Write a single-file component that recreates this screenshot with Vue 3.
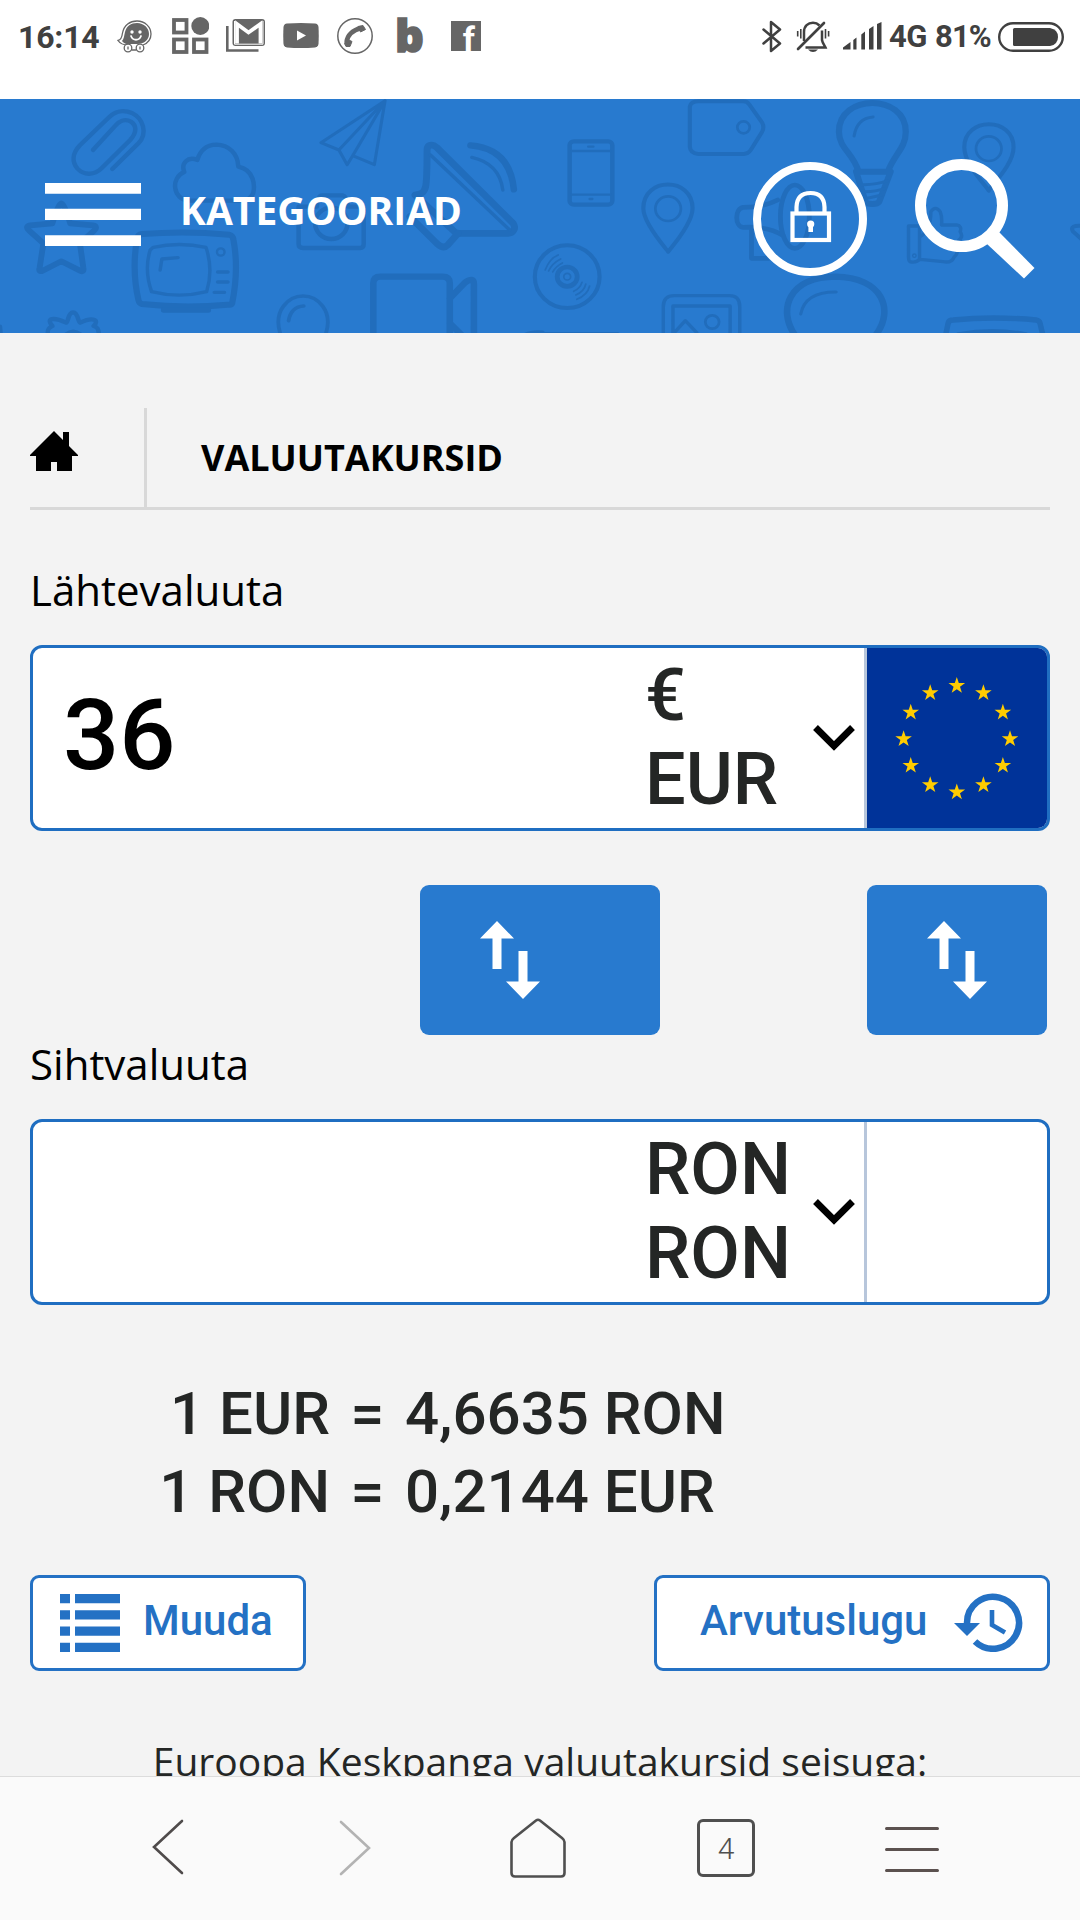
<template>
  <div class="phone">
    <!-- status bar -->
    <div class="status-bar">
      <span class="status-text clock">16:14</span>
      <svg class="icon waze" viewBox="0 0 35 33">
        <path d="M11 25C7 25 3 23.500 1 20.500C4 20 5 17 5.500 13C7 5 13 1 20 1C28 1 34 7 34 14C34 19 31 23 26 25" fill="none" stroke="#666" stroke-width="1.300" />
        <path d="M5 21C7 19 7 16 8 12C9.500 6 14 3 20 3C27 3 32 8 32 14C32 20 27 24 20 24H10C8 24 6 22.500 5 21Z" fill="#666" />
        <circle cx="15" cy="12" r="1.700" fill="#fff" />
        <circle cx="23" cy="12" r="1.700" fill="#fff" />
        <path d="M14 16C16 21 22 21 24 16" fill="none" stroke="#fff" stroke-width="1.800" stroke-linecap="round" />
        <circle cx="11" cy="28" r="3.800" fill="#fff" stroke="#666" stroke-width="1.300" />
        <circle cx="23" cy="28" r="3.800" fill="#fff" stroke="#666" stroke-width="1.300" />
        <path d="M14.500 30H19.500M11 26.500V29.500M23 26.500V29.500" stroke="#666" stroke-width="1.300" />
      </svg>
      <svg class="icon apps" viewBox="0 0 37 37">
        <g fill="none" stroke="#666" stroke-width="3.800">
          <rect x="2" y="3" width="12.500" height="12.500" />
          <rect x="2" y="22.500" width="12.500" height="12.500" />
          <rect x="22" y="22.500" width="12.500" height="12.500" />
        </g>
        <circle cx="28.300" cy="9" r="9" fill="#666" />
      </svg>
      <svg class="icon gmail" viewBox="0 0 39 33">
        <path d="M1.300 7V31.500H32.500" fill="none" stroke="#666" stroke-width="2.600" />
        <rect x="6.500" y="0" width="32.500" height="27" rx="3" fill="#666" />
        <path d="M11 24.500V5L22.500 13.500L34.500 5V24.500" fill="none" stroke="#fff" stroke-width="3.800" />
        <path d="M8.500 2V25.200H37V2" fill="none" stroke="#fff" stroke-width="1" />
      </svg>
      <svg class="icon youtube" viewBox="0 0 36 25">
        <path d="M4 .6Q18 -.6 32 .6Q35 1 35.500 4Q36 12.500 35.500 21Q35 24 32 24.400Q18 25.600 4 24.400Q1 24 .5 21Q0 12.500 .5 4Q1 1 4 .6Z" fill="#666" />
        <path d="M14 7.500L23 12.500L14 17.500Z" fill="#fff" />
      </svg>
      <svg class="icon call" viewBox="0 0 36 36">
        <circle cx="18" cy="18" r="17.200" fill="none" stroke="#666" stroke-width="1.500" />
        <path d="M9.500 24Q11 13.500 24 10" fill="none" stroke="#666" stroke-width="4.500" />
        <path d="M21 8.500L26 7.500L28.500 11.500L23.500 14ZM7.500 25.500L9.500 20.800L15 23.500L13 28.500L9 28.500Z" fill="#666" stroke="#666" stroke-linejoin="round" />
      </svg>
      <span class="beta">b</span>
      <span class="facebook">f</span>

      <svg class="icon bluetooth" viewBox="0 0 20 33">
        <path d="M1.500 9.500L18 23.500L9 31V2L18 9.500L1.500 23.500" fill="none" stroke="#404040" stroke-width="2.500" stroke-linejoin="round" stroke-linecap="round" />
      </svg>
      <svg class="icon bell" viewBox="0 0 34 32">
        <g fill="none" stroke="#404040">
          <path d="M8 20V11C8 5 12 1.800 17 1.800C20 1.800 22 3 23.500 4.500M26 9.500V19C26.500 22 28.500 24 29.500 26.500H9.500" stroke-width="2.500" />
          <path d="M28 2L2 28" stroke-width="2.600" stroke-linecap="round" />
          <path d="M1.700 10V15.500M4.800 8V17.500M29.500 8V17.500M32.600 10V15.500" stroke-width="1.600" />
        </g>
        <path d="M12 28.500H22Q17 33.500 12 28.500Z" fill="#404040" />
      </svg>
      <svg class="icon signal" viewBox="0 0 39 28">
        <path d="M0 27.500V25.500L7.500 20V27.500ZM10.300 27.500V18L13.500 15.500V27.500ZM18.300 27.500V12.500L22 9.500V27.500ZM26 27.500V7L30.500 4V27.500ZM34 27.500V2L38.500 0V27.500Z" fill="#404040" />
      </svg>
      <span class="status-text network">4G</span>
      <span class="status-text percent">81%</span>
      <svg class="icon battery" viewBox="0 0 66 30">
        <rect x="1.200" y="1.200" width="63.600" height="27.600" rx="13.800" fill="none" stroke="#404040" stroke-width="2.400" />
        <path d="M16.500 6H52Q60 7.500 60 15T52 24H16.500Q15 24 15 22.500V7.500Q15 6 16.500 6Z" fill="#404040" />
      </svg>
    </div>

    <!-- site header -->
    <header class="site-header">
      <svg class="pattern" viewBox="0 0 1080 234" fill="none" stroke="#216dbc" stroke-linecap="round" stroke-linejoin="round">
        <g transform="translate(0 -9) scale(.3444 .3333)" stroke-width="13">
          <path d="M326 237L402 160C430 130 415 85 385 70C350 55 330 68 315 83L232 166C210 190 208 215 225 236C245 258 275 255 295 235L378 150C400 125 395 105 380 95C362 85 345 95 335 107L270 180" />
          <path d="M735 310C740 290 740 240 692 230C690 190 665 165 628 164C595 165 580 185 573 210C545 198 525 220 535 246C495 262 500 330 550 332H700Q725 332 735 310Z" />
          <path d="M1118 32L932 158L984 180L1008 224L1024 197L1087 224ZM1118 32L984 180M1118 32L1024 197" stroke-width="9" />
          <path d="M178 340Q186 340 204 400L270 406C282 408 280 416 274 421L232 460L242 534C244 544 240 546 232 542L178 514L124 542C116 546 112 542 115 534L126 460L84 421C76 414 76 408 88 406L152 400Q170 340 178 340Z" stroke-width="17" />
          <path d="M412 432Q540 422 665 434Q676 436 678 450Q694 540 674 640Q672 646 660 644Q540 656 412 642Q404 640 402 630Q382 540 398 446Q400 434 412 432Z" stroke-width="18" />
          <path d="M445 472Q520 455 598 472Q620 540 600 605Q520 626 440 605Q418 540 436 480ZM465 540L470 507L517 503M632 546H662M632 576H662M622 607H652" stroke-width="10" />
          <circle cx="641" cy="486" r="11" stroke-width="7" />
          <path d="M475 660H605" stroke-width="16" />
          <path d="M870 350H920Q922 316 935 316H995Q1008 318 1010 350H1048Q1056 350 1056 360V462Q1056 474 1046 474H880Q867 474 867 462V350" />
          <circle cx="962" cy="400" r="47" />
          <path d="M1240 180C1240 165 1255 160 1268 172L1490 400C1500 415 1490 430 1475 430H1325L1205 315C1240 310 1240 300 1240 180Z" stroke-width="20" />
          <path d="M1330 430L1300 465Q1288 478 1270 462L1190 380" stroke-width="20" />
          <path d="M1250 195L1480 420M1370 202Q1450 220 1460 300" stroke-width="10" />
          <path d="M1366 166Q1480 175 1492 298" stroke-width="19" />
          <path d="M1084 735V580Q1084 560 1104 560H1285Q1306 560 1306 580V735M1306 625L1350 578Q1376 560 1376 582V735M1306 700L1340 735" stroke-width="19" />
          <path d="M140 735C135 715 145 712 152 708C132 685 155 680 192 698C200 695 196 668 212 667C228 668 225 695 233 698C270 680 290 690 272 708C285 712 285 718 288 735M190 735Q212 715 236 735" />
          <path d="M815 735C790 660 840 618 880 618C920 618 970 660 945 735M838 692Q845 650 882 648" stroke-width="11" />
          <path d="M0 710L2 735M1525 735Q1545 725 1575 728" />
        </g>
        <g transform="translate(540 -9) scale(.3444 .3333)" stroke-width="12">
          <rect x="86" y="154" width="124" height="190" rx="12" stroke-width="13" />
          <path d="M92 183H205M92 314H205M140 170H155M144 327H152" stroke-width="7" />
          <path d="M435 50Q438 34 460 34H590Q602 34 608 44L645 98Q652 112 645 125L612 180Q604 192 592 192H460Q436 190 435 170Z" />
          <circle cx="591" cy="112" r="18" stroke-width="8" />
          <path d="M372 485C365 475 300 400 300 355C300 260 443 260 443 355C443 400 380 475 372 485Z" />
          <circle cx="372" cy="356" r="37" stroke-width="8" />
          <circle cx="79" cy="560" r="94" />
          <circle cx="79" cy="560" r="29" stroke-width="14" />
          <circle cx="79" cy="560" r="10" stroke-width="5" />
          <path d="M15 540Q28 505 53 495M25 543Q35 520 60 507M37 546Q45 530 65 519M107 628Q138 615 144 588M104 615Q128 605 133 582M98 604Q116 596 122 577" stroke-width="5" />
          <path d="M925 245C910 190 868 175 868 125C868 10 1062 10 1062 125C1062 175 1030 190 1010 245M918 245H1018M918 245L945 335Q950 342 965 342Q980 342 985 335L1018 245" stroke-width="18" />
          <path d="M912 138Q920 85 967 81M935 284Q975 285 1010 272M945 305Q975 305 1000 296M950 325L990 316" stroke-width="9" />
          <path d="M1303 302C1295 285 1232 225 1232 172C1232 80 1375 80 1375 172C1375 225 1310 285 1303 302Z" />
          <circle cx="1303" cy="176" r="37" stroke-width="8" />
          <path d="M690 330Q650 352 590 352C565 355 565 410 590 412Q660 408 705 436M614 415V505H665V488" stroke-width="14" />
          <ellipse cx="740" cy="380" rx="42" ry="95" stroke-width="14" />
          <path d="M1070 408H1102V508Q1095 518 1078 516Q1070 516 1070 500ZM1104 440Q1135 420 1135 365Q1148 345 1162 365Q1168 380 1166 405H1210Q1226 408 1220 425Q1230 440 1216 450Q1224 468 1210 478Q1215 490 1202 502Q1195 520 1170 515L1104 508" stroke-width="10" />
          <circle cx="1087" cy="497" r="5" stroke-width="4" />
          <path d="M740 735C690 660 720 562 858 560C995 562 1030 660 975 735" stroke-width="19" />
          <path d="M757 672Q770 605 860 606" stroke-width="9" />
          <path d="M358 735V650Q358 617 390 617H550Q580 617 580 650V735M386 735V648H552V735M390 728L422 692L455 728" stroke-width="10" />
          <circle cx="500" cy="696" r="20" stroke-width="8" />
          <path d="M1178 735L1185 700Q1187 690 1200 690Q1315 678 1440 690Q1450 692 1452 700L1460 735M1215 735Q1315 715 1410 735" stroke-width="16" />
          <path d="M1575 408Q1535 405 1548 425L1575 450M0 732H225" />
        </g>
      </svg>
      <svg class="menu-icon" viewBox="0 0 96 63">
        <path d="M0 0H96V10.700H0ZM0 25.700H96V37H0ZM0 52.300H96V63H0Z" fill="#fff" />
      </svg>
      <span class="header-title">KATEGOORIAD</span>
      <svg class="lock-icon" viewBox="0 0 114 114" fill="none" stroke="#fff">
        <circle cx="57" cy="57" r="53" stroke-width="8" />
        <rect x="39.500" y="51.500" width="36.500" height="26.500" stroke-width="4.200" />
        <path d="M43.500 50V45Q44 31 57.500 31T71.500 45V50" stroke-width="4.200" />
        <circle cx="57.700" cy="62" r="3.600" fill="#fff" stroke="none" />
        <path d="M57.700 62V70" stroke-width="4.600" />
      </svg>
      <svg class="search-icon" viewBox="0 0 120 120">
        <circle cx="46.500" cy="46.500" r="41" fill="none" stroke="#fff" stroke-width="11" />
        <path d="M72 85L84 73L119.500 109L109 119.500Z" fill="#fff" />
      </svg>
    </header>

    <main class="content">
      <nav class="breadcrumb">
        <div class="crumb-home">
          <svg viewBox="0 0 48 40">
            <path d="M24 0L33 9V1H39V15L48 24V25H42V40H27V31H21V40H6V25H0V24Z" fill="#000" />
          </svg>
        </div>
        <span class="crumb-title">VALUUTAKURSID</span>
      </nav>

      <label class="field-label">Lähtevaluuta</label>
      <div class="currency-box">
        <input v-model="source.amount" class="amount" type="text">
        <div class="currency"><span>{{ source.symbol }}</span><span>{{ source.code }}</span></div>
        <svg class="chevron" viewBox="0 0 42 26"><path d="M2.500 2.500L21 21L39.500 2.500" fill="none" stroke="#000" stroke-width="6.800" /></svg>
        <div class="flag eu">
          <svg viewBox="0 0 180 180" fill="#fc0">
            <path
              v-for="star in stars"
              :key="star.id"
              d="M0 -8.700L2 -2.700H8.300L3.200 1L5.100 7L0 3.400L-5.100 7L-3.200 1L-8.300 -2.700H-2Z"
              :transform="`translate(${star.x} ${star.y})`"
            />
          </svg>
        </div>
      </div>

      <div class="swap-row">
        <button
          v-for="name in ['wide', 'narrow']"
          :key="name"
          :class="['swap-button', name]"
          @click="swapCurrencies"
        >
          <svg viewBox="0 0 60 78">
            <path d="M17 0L34 17.500H21.500V48H12.500V17.500H0ZM38.500 30H47.500V60.500H60L43 78L26 60.500H38.500Z" fill="#fff" />
          </svg>
        </button>
      </div>

      <label class="field-label">Sihtvaluuta</label>
      <div class="currency-box">
        <input v-model="target.amount" class="amount" type="text">
        <div class="currency"><span>{{ target.symbol }}</span><span>{{ target.code }}</span></div>
        <svg class="chevron" viewBox="0 0 42 26"><path d="M2.500 2.500L21 21L39.500 2.500" fill="none" stroke="#000" stroke-width="6.800" /></svg>
        <div class="flag"></div>
      </div>

      <div class="rates">
        <template v-for="rate in rates" :key="rate.from">
          <span class="rate-from">{{ rate.from }}</span>
          <span>=</span>
          <span>{{ rate.to }}</span>
        </template>
      </div>

      <div class="actions">
        <button class="action-button edit">
          <svg viewBox="0 0 60 58">
            <path d="M0 0H10V9.300H0ZM15 0H60V9.300H15ZM0 16.300H10V25.500H0ZM15 16.300H60V25.500H15ZM0 32.500H10V41.700H0ZM15 32.500H60V41.700H15ZM0 48.700H10V58H0ZM15 48.700H60V58H15Z" fill="#2471c4" />
          </svg>
          <span>Muuda</span>
        </button>
        <button class="action-button history">
          <span>Arvutuslugu</span>
          <svg viewBox="0 0 69 59">
            <path d="M13 30A26 26 0 1 1 21 48.500" fill="none" stroke="#2471c4" stroke-width="6.500" />
            <path d="M0 30H26L13 43Z" fill="#2471c4" />
            <path d="M38 17V32L51 39.500" fill="none" stroke="#2471c4" stroke-width="4.600" />
          </svg>
        </button>
      </div>

      <p class="footnote">Euroopa Keskpanga valuutakursid seisuga:</p>
    </main>

    <!-- browser toolbar -->
    <nav class="toolbar">
      <svg class="tool back" viewBox="0 0 32 56"><path d="M30 2L2 28L30 54" fill="none" stroke="#4f4b4b" stroke-width="2.600" stroke-linecap="round" /></svg>
      <svg class="tool forward" viewBox="0 0 32 56"><path d="M2 2L30 28L2 54" fill="none" stroke="#b3b3b3" stroke-width="2.600" stroke-linecap="round" /></svg>
      <svg class="tool home" viewBox="0 0 56 60"><path d="M4 20L26 2.500Q28 1 30 2.500L52 20Q54.500 22 54.500 24V55Q54.500 58.500 51 58.500H5Q1.500 58.500 1.500 55V24Q1.500 22 4 20Z" fill="none" stroke="#4f4f4f" stroke-width="2.600" /></svg>
      <div class="tool tabs">4</div>
      <svg class="tool more" viewBox="0 0 54 48"><path d="M1.500 3.500H52.500M1.500 24.500H52.500M1.500 45.500H52.500" stroke="#5b514f" stroke-width="3" stroke-linecap="round" /></svg>
    </nav>
  </div>
</template>

<script setup>
import { ref } from 'vue'

const source = ref({ amount: '36', symbol: '€', code: 'EUR' })
const target = ref({ amount: '', symbol: 'RON', code: 'RON' })

const rates = ref([
  { from: '1 EUR', to: '4,6635 RON' },
  { from: '1 RON', to: '0,2144 EUR' }
])

// twelve stars of the EU flag
const stars = Array.from({ length: 12 }, (_, i) => {
  const angle = (i * Math.PI) / 6
  return {
    id: i,
    x: (89.8 + 53.2 * Math.sin(angle)).toFixed(2),
    y: (91 - 53.2 * Math.cos(angle)).toFixed(2)
  }
})

const swapCurrencies = () => {
  const old = source.value
  source.value = target.value
  target.value = old
}
</script>

<style>
body {
  margin: 0;
}
</style>

<style scoped>
* {
  box-sizing: border-box;
}
svg {
  display: block;
  flex: none;
}
button {
  margin: 0;
  cursor: pointer;
}
.phone {
  width: 1080px;
  height: 1920px;
  overflow: hidden;
  display: flex;
  flex-direction: column;
  background: #f3f3f3;
  font-family: "Open Sans", "Noto Sans", sans-serif;
}

/* status bar */
.status-bar {
  height: 99px;
  flex: none;
  display: flex;
  align-items: flex-start;
  background: #fff;
  font-family: Roboto, sans-serif;
  color: #404040;
}
.status-text {
  font-size: 32px;
  font-weight: 700;
  line-height: 38px;
  margin-top: 18px;
  white-space: nowrap;
}
.clock {
  width: 99px;
  padding-left: 18px;
  letter-spacing: -0.2px;
}
.waze {
  width: 35px;
  height: 33px;
  margin: 20px 0 0 18px;
}
.apps {
  width: 37px;
  height: 37px;
  margin: 17px 0 0 20px;
}
.gmail {
  width: 39px;
  height: 33px;
  margin: 19px 0 0 17px;
}
.youtube {
  width: 36px;
  height: 25px;
  margin: 23px 0 0 18px;
}
.call {
  width: 36px;
  height: 36px;
  margin: 18px 0 0 18px;
}
.beta {
  width: 30px;
  margin: 11px 0 0 22px;
  font-family: "Open Sans", sans-serif;
  font-size: 45px;
  line-height: 48px;
  font-weight: 800;
  color: #666;
  -webkit-text-stroke: 1.5px #666;
}
.facebook {
  width: 30px;
  height: 30px;
  margin: 21px 0 0 26px;
  padding-right: 6px;
  background: #666;
  color: #fff;
  font-size: 34px;
  line-height: 37px;
  font-weight: 700;
  text-align: right;
}
.bluetooth {
  width: 20px;
  height: 33px;
  margin: 20px 0 0 auto;
}
.bell {
  width: 34px;
  height: 32px;
  margin: 21px 0 0 14px;
}
.signal {
  width: 39px;
  height: 28px;
  margin: 22px 0 0 13px;
}
.network {
  width: 40px;
  margin-left: 7px;
  font-size: 31px;
  letter-spacing: -0.5px;
}
.percent {
  width: 57px;
  margin-left: 6px;
  font-size: 31px;
  letter-spacing: -0.9px;
}
.battery {
  width: 66px;
  height: 30px;
  margin: 22px 16px 0 6px;
}

/* header */
.site-header {
  position: relative;
  height: 234px;
  flex: none;
  display: flex;
  align-items: flex-start;
  background: #287acf;
  overflow: hidden;
}
.pattern {
  position: absolute;
  inset: 0;
  width: 1080px;
  height: 234px;
}
.menu-icon,
.header-title,
.lock-icon,
.search-icon {
  position: relative;
}
.menu-icon {
  width: 96px;
  height: 63px;
  margin: 84px 0 0 45px;
}
.header-title {
  margin: 91px 0 0 39px;
  font-size: 39px;
  line-height: 40px;
  font-weight: 700;
  color: #fff;
}
.lock-icon {
  width: 114px;
  height: 114px;
  margin: 63px 0 0 auto;
}
.search-icon {
  width: 120px;
  height: 120px;
  margin: 60px 45px 0 48px;
}

/* content */
.content {
  flex: 1;
  min-height: 0;
  overflow: hidden;
  padding: 75px 30px 0;
}
.breadcrumb {
  display: flex;
  height: 102px;
  border-bottom: 3px solid #d8d8d8;
}
.crumb-home {
  width: 117px;
  padding-top: 23px;
  border-right: 3px solid #d8d8d8;
}
.crumb-home svg {
  width: 48px;
  height: 40px;
}
.crumb-title {
  padding-left: 54px;
  font-size: 36px;
  line-height: 99px;
  font-weight: 700;
  color: #000;
}
.field-label {
  display: block;
  height: 60px;
  margin-bottom: 25px;
  font-size: 42px;
  line-height: 60px;
  color: #000;
}
.breadcrumb + .field-label {
  margin-top: 50px;
}
.currency-box {
  display: flex;
  height: 186px;
  border: 3px solid #1f6ec1;
  border-radius: 12px;
  background: #fff;
  overflow: hidden;
  font-family: Roboto, sans-serif;
  font-weight: 500;
}
.amount {
  width: 612px;
  height: 180px;
  margin: 0;
  padding: 0 0 7px 30px;
  border: none;
  outline: none;
  background: transparent;
  font: inherit;
  font-size: 99px;
  color: #000;
}
.currency {
  display: flex;
  flex-direction: column;
  width: 168px;
  padding-top: 6px;
  font-size: 72px;
  line-height: 84px;
  color: #242625;
}
.chevron {
  width: 42px;
  height: 26px;
  margin: 77px 9px 0 0;
}
.flag {
  width: 183px;
  height: 180px;
  flex: none;
  border-left: 3px solid #b7c6db;
}
.flag.eu {
  background: #039;
}
.swap-row {
  display: flex;
  justify-content: space-between;
  height: 150px;
  margin: 54px 3px -1px 390px;
}
.swap-button {
  height: 150px;
  padding: 0 0 0 60px;
  border: none;
  border-radius: 9px;
  background: #287acf;
}
.swap-button svg {
  width: 60px;
  height: 78px;
}
.wide {
  width: 240px;
}
.narrow {
  width: 180px;
}
.rates {
  display: grid;
  grid-template-columns: 300px 34px auto;
  column-gap: 20.5px;
  margin-top: 70px;
  font-family: Roboto, sans-serif;
  font-size: 60px;
  line-height: 78px;
  font-weight: 500;
  color: #242625;
}
.rate-from {
  text-align: right;
}
.actions {
  display: flex;
  justify-content: space-between;
  margin-top: 44px;
}
.action-button {
  display: flex;
  height: 96px;
  padding: 0;
  border: 3px solid #2471c4;
  border-radius: 9px;
  background: #fff;
  font-family: Roboto, sans-serif;
  font-size: 42px;
  line-height: 86px;
  font-weight: 500;
  color: #2471c4;
}
.edit {
  width: 276px;
}
.edit svg {
  width: 60px;
  height: 58px;
  margin: 16px 23px 0 27px;
}
.history {
  width: 396px;
  padding-left: 43px;
}
.history svg {
  width: 69px;
  height: 59px;
  margin: 15px 24px 0 auto;
}
.footnote {
  margin: 60px 0 0;
  text-align: center;
  font-size: 39px;
  line-height: 60px;
  color: #242625;
  white-space: nowrap;
}

/* toolbar */
.toolbar {
  height: 144px;
  flex: none;
  display: flex;
  align-items: flex-start;
  border-top: 1px solid #dcdcdc;
  background: #fafafa;
}
.back {
  width: 32px;
  height: 56px;
  margin: 42px 0 0 152px;
}
.forward {
  width: 32px;
  height: 56px;
  margin: 43px 0 0 155px;
}
.home {
  width: 56px;
  height: 60px;
  margin: 41px 0 0 139px;
}
.tabs {
  width: 58px;
  height: 58px;
  margin: 42px 0 0 131px;
  border: 3px solid #4f4f4f;
  border-radius: 6px;
  font-family: Roboto, sans-serif;
  font-size: 30px;
  line-height: 53px;
  font-weight: 300;
  text-align: center;
  color: #4f4f4f;
}
.more {
  width: 54px;
  height: 48px;
  margin: 48px 0 0 130px;
}
</style>
